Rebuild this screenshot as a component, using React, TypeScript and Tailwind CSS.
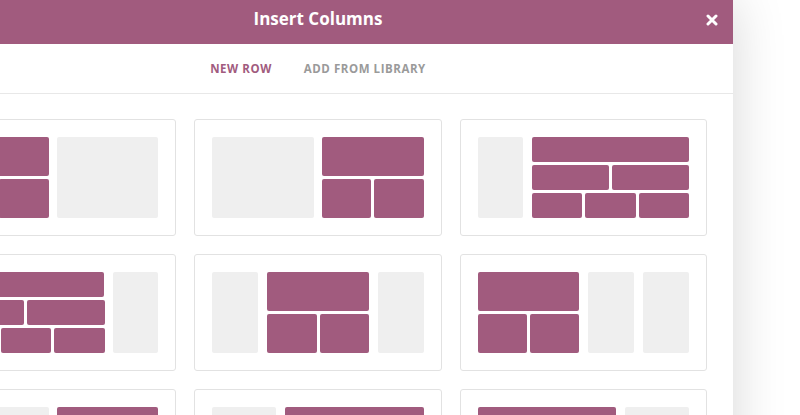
import React from "react";

const purple = "bg-[#a15b7e]";

const Grey = ({ w }: { w: string }) => (
  <div className={`${w} h-full rounded-[2px] bg-[#efefef]`} />
);

// purple block: top full, bottom split in two
const TwoRows = ({ w }: { w: string }) => (
  <div className={`${w} h-full flex flex-col gap-[3px]`}>
    <div className={`flex-1 rounded-[2px] ${purple}`} />
    <div className="flex-1 flex gap-[3px]">
      <div className={`flex-1 rounded-[2px] ${purple}`} />
      <div className={`flex-1 rounded-[2px] ${purple}`} />
    </div>
  </div>
);

// purple block: 1, 2, 3 pieces per row
const ThreeRows = ({ w }: { w: string }) => (
  <div className={`${w} h-full flex flex-col gap-[3px]`}>
    <div className={`flex-1 rounded-[2px] ${purple}`} />
    <div className="flex-1 flex gap-[3px]">
      <div className={`flex-1 rounded-[2px] ${purple}`} />
      <div className={`flex-1 rounded-[2px] ${purple}`} />
    </div>
    <div className="flex-1 flex gap-[3px]">
      <div className={`flex-1 rounded-[2px] ${purple}`} />
      <div className={`flex-1 rounded-[2px] ${purple}`} />
      <div className={`flex-1 rounded-[2px] ${purple}`} />
    </div>
  </div>
);

const Solid = ({ w }: { w: string }) => (
  <div className={`${w} h-full rounded-[2px] ${purple}`} />
);

const Card = ({ children, gap = "gap-[8px]" }: { children: React.ReactNode; gap?: string }) => (
  <div className="border border-[#e2e2e2] rounded-[3px] p-[17px] bg-white cursor-pointer">
    <div className={`h-[81px] flex ${gap}`}>{children}</div>
  </div>
);

const App = () => {
  return (
    <div
      className="h-[415px] w-[800px] overflow-hidden bg-white"
      style={{ fontFamily: '"Open Sans", "Noto Sans", sans-serif' }}
    >
      <div className="ml-[-97px] w-[830px] min-h-[415px] bg-white shadow-[0_0_50px_rgba(0,0,0,0.16)]">
        <header className="relative h-[44px] bg-[#a15b7e] flex items-center justify-center pb-[6px]">
          <h2 className="text-white text-[17px] font-bold">Insert Columns</h2>
          <button className="absolute right-[15px] top-[14px] text-white">
            <svg width="12" height="12" viewBox="0 0 12 12">
              <path d="M2 2 L10 10 M10 2 L2 10" stroke="white" strokeWidth="3" strokeLinecap="round" />
            </svg>
          </button>
        </header>

        <nav className="h-[50px] border-b border-[#e8e8e8] flex items-center justify-center gap-[32px] text-[11.5px] font-bold uppercase tracking-[0.55px]">
          <span className="text-[#a15b7e]">New Row</span>
          <span className="text-[#9a9a9a]">Add from Library</span>
        </nav>

        <div className="px-[26px] pt-[25px] grid grid-cols-3 gap-[18px]">
          <Card>
            <TwoRows w="w-[102px]" />
            <Grey w="w-[102px]" />
          </Card>
          <Card>
            <Grey w="w-[102px]" />
            <TwoRows w="w-[102px]" />
          </Card>
          <Card gap="gap-[9px]">
            <Grey w="w-[45px]" />
            <ThreeRows w="w-[158px]" />
          </Card>

          <Card gap="gap-[9px]">
            <ThreeRows w="w-[158px]" />
            <Grey w="w-[45px]" />
          </Card>
          <Card gap="gap-[9px]">
            <Grey w="w-[46px]" />
            <TwoRows w="w-[102px]" />
            <Grey w="w-[46px]" />
          </Card>
          <Card gap="gap-[9px]">
            <TwoRows w="w-[102px]" />
            <Grey w="w-[46px]" />
            <Grey w="w-[46px]" />
          </Card>

          <Card>
            <Grey w="w-[102px]" />
            <Solid w="w-[102px]" />
          </Card>
          <Card gap="gap-[9px]">
            <Grey w="w-[64px]" />
            <Solid w="w-[139px]" />
          </Card>
          <Card gap="gap-[9px]">
            <Solid w="w-[139px]" />
            <Grey w="w-[64px]" />
          </Card>
        </div>
      </div>
    </div>
  );
};

export default App;
